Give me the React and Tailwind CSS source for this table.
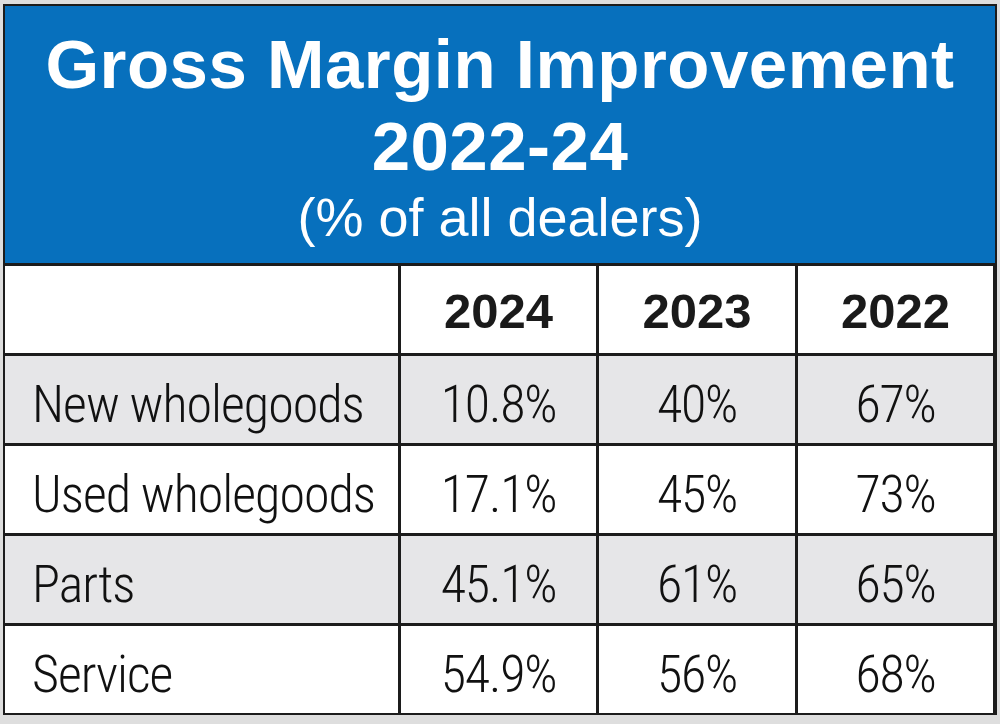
export default function App() {
  const rows = [
    ["New wholegoods", "10.8%", "40%", "67%", true],
    ["Used wholegoods", "17.1%", "45%", "73%", false],
    ["Parts", "45.1%", "61%", "65%", true],
    ["Service", "54.9%", "56%", "68%", false],
  ];

  const narrow = { fontFamily: '"Roboto Condensed", "Liberation Sans Narrow", "DejaVu Sans Condensed", sans-serif' };

  return (
    <div className="w-[1000px] h-[724px] bg-[#dedede] pt-[4px] pl-[3px] font-['Liberation_Sans',Arial,sans-serif]">
      <div className="w-[994px] border-[2px] border-[#1c1c1c] bg-[#1c1c1c]">
        <div className="h-[257px] bg-[#0770bd] text-white text-center flex flex-col items-center pt-[17px]">
          <div className="text-[69px] font-bold leading-[84px] tracking-[0.5px] whitespace-nowrap">Gross Margin Improvement</div>
          <div className="text-[69px] font-bold leading-[80px] tracking-[0.5px]">2022-24</div>
          <div className="text-[54px] leading-[56px] mt-[2px]">(% of all dealers)</div>
        </div>
        <div className="grid grid-cols-[393px_195px_196px_195px] gap-[3px] pt-[3px]">
          <div className="bg-white h-[87px]"></div>
          {["2024", "2023", "2022"].map((y) => (
            <div key={y} className="bg-white h-[87px] flex items-center justify-center text-[49px] font-bold text-[#1a1a1a] pt-[5px]">
              {y}
            </div>
          ))}
          {rows.map(([label, a, b, c, shaded]) => {
            const bg = shaded ? "bg-[#e6e6e8]" : "bg-white";
            return [
              <div key={label} className={`${bg} h-[87px] flex items-center pl-[27px] text-[52px] font-light tracking-[-1px] whitespace-nowrap text-[#111] pt-[10px]`} style={narrow}>
                {label}
              </div>,
              ...[a, b, c].map((v, i) => (
                <div key={label + i} className={`${bg} h-[87px] flex items-center justify-center text-[52px] font-light tracking-[-1.2px] text-[#111] pt-[10px]`} style={narrow}>
                  {v}
                </div>
              )),
            ];
          })}
        </div>
      </div>
    </div>
  );
}
